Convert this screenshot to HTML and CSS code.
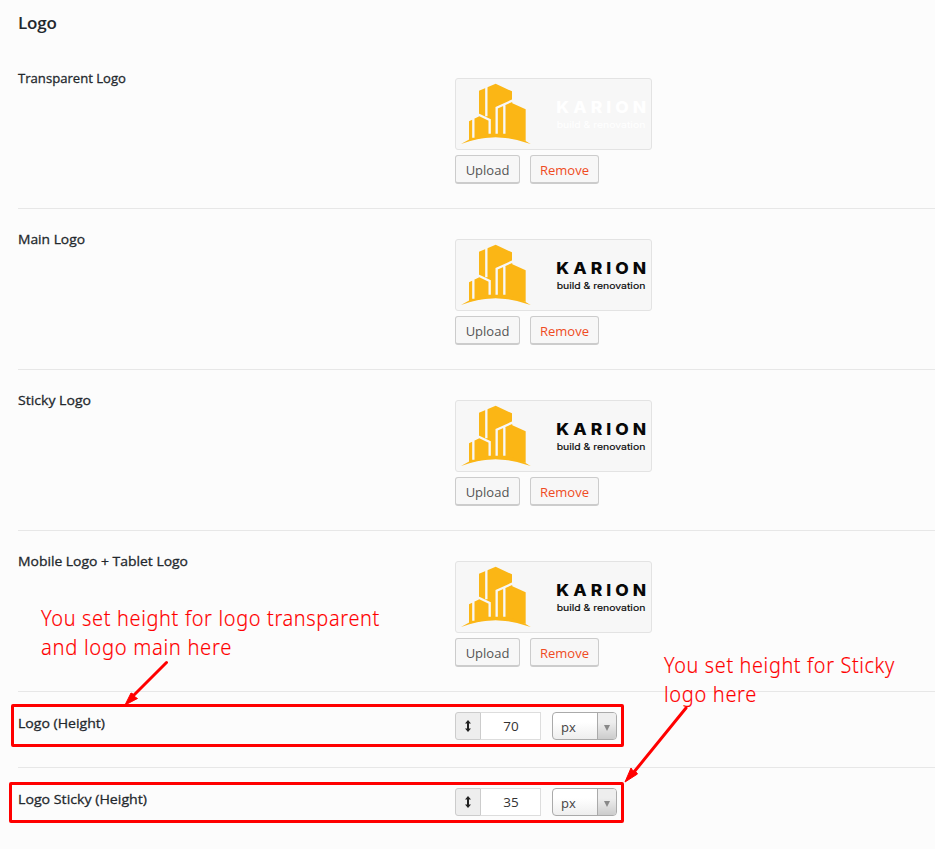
FILE: index.html
```html
<!DOCTYPE html>
<html lang="en">
<head>
<meta charset="utf-8">
<title>Logo</title>
<link rel="stylesheet" href="styles.css">
</head>
<body>
<main class="panel">
  <h2 class="title">Logo</h2>
  <div id="rows"></div>
</main>
<svg class="notes" width="935" height="849" viewBox="0 0 935 849">
  <g class="frame">
    <rect x="12.5" y="705.5" width="610" height="40" rx="0.5"/>
    <rect x="10.5" y="783.5" width="612" height="38" rx="0.5"/>
    <path d="M166.5 662.5L132 697M686 708L634 772"/>
  </g>
  <path class="head" d="M125 705L131 693L133 694L135 697L137.500 698.500ZM625 782L631 768L633 771L636 772L637.500 774Z"/>
  <text x="41" y="626" textLength="339" lengthAdjust="spacingAndGlyphs">You set height for logo transparent</text>
  <text x="41" y="655" textLength="191" lengthAdjust="spacingAndGlyphs">and logo main here</text>
  <text x="664" y="673" textLength="231" lengthAdjust="spacingAndGlyphs">You set height for Sticky</text>
  <text x="664" y="702" textLength="93" lengthAdjust="spacingAndGlyphs">logo here</text>
</svg>
<script src="app.js"></script>
</body>
</html>
```
FILE: styles.css
```css
* { box-sizing: border-box; }
body { margin: 0; width: 935px; height: 849px; overflow: hidden; position: relative; background: #fcfcfc; color: #23282d; font-family: "Open Sans", "Noto Sans", sans-serif; font-size: 13px; }
.panel { padding-left: 18px; }
.title { margin: 0; height: 48px; padding-top: 11px; font-size: 17px; line-height: 24px; font-weight: 600; letter-spacing: -0.2px; }
.row { display: flex; height: 161px; border-bottom: 1px solid #e7e7e7; }
.row.size { height: 76px; }
.row:last-child { border-bottom: 0; }
.label { width: 437px; padding-top: 20px; line-height: 20px; font-size: 13.500px; font-weight: 400; }
.label svg { display: block; overflow: visible; fill: #23282d; stroke: #23282d; stroke-width: 0.3; }
.media { padding-top: 30px; }
.preview { width: 197px; height: 72px; border: 1px solid #e3e3e3; border-radius: 3px; background: #f7f7f7; }
.preview svg { display: block; margin: -1px; }
.mark { fill: #fbb615; }
.gap { fill: none; stroke: #f7f7f7; stroke-width: 7; }
.brand { font: 800 48px "Inter", sans-serif; letter-spacing: 11px; fill: #080808; }
.tag { font: 400 27px "Inter", sans-serif; fill: #080808; stroke: #080808; stroke-width: 0.5; }
.light .brand, .light .tag { fill: #fff; stroke: none; }
.buttons { display: flex; gap: 10px; margin-top: 5px; }
.btn { height: 29px; width: 65px; padding: 2px 0 0; border: 1px solid #ccc; border-bottom-width: 2px; border-radius: 3px; background: #f7f7f7; color: #555; font: 13px/24px "Open Sans", sans-serif; }
.btn.remove { width: 69px; color: #ef4b23; }
.controls { display: flex; padding-top: 20px; }
.size .label { padding-top: 21px; }
.addon { width: 26px; height: 28px; border: 1px solid #ccc; border-radius: 3px 0 0 3px; background: #eee; display: flex; align-items: center; justify-content: center; }
.value { width: 60px; height: 28px; border: 1px solid #ddd; border-left: 0; background: #fff; color: #333; text-align: center; line-height: 26px; font-size: 13.500px; padding-left: 1px; }
.unit { width: 65px; height: 28px; margin-left: 11px; border: 1px solid #aaa; border-radius: 4px; display: flex; overflow: hidden; background: linear-gradient(#fff 35%, #eee); color: #444; }
.unit span { width: 44px; padding-left: 8px; line-height: 29px; }
.unit i { flex: 1; border-left: 1px solid #aaa; background: linear-gradient(#eee 35%, #ccc); display: flex; align-items: center; justify-content: center; padding-top: 3px; }
.unit i::after { content: ""; border: 3px solid transparent; border-top: 6px solid #888; border-bottom: 0; }
.notes { position: absolute; left: 0; top: 0; pointer-events: none; }
.notes text { font: 300 21px "Noto Sans", "Open Sans", sans-serif; letter-spacing: 0.7px; fill: #f00; stroke: #f00; stroke-width: 0.15; }
.frame { fill: none; stroke: #f00; stroke-width: 3; stroke-linecap: round; }
.head { fill: #f00; stroke: #f00; stroke-width: 1; }
```
FILE: app.js
```js
const label = (text, width) => `<div class="label"><svg width="${width}" height="20"><text x="0" y="15" textLength="${width}" lengthAdjust="spacingAndGlyphs">${text}</text></svg></div>`;

const logo = `<svg width="197" height="72" viewBox="30 27 591 216">
  <path class="mark" d="M102 65L152 44L201 67V95L202 103L242 121V216Q205 205 152 204Q105 205 72 215V153L102 139Z"/>
  <path class="mark" d="M48 225Q100 192 152 193Q205 192 257 225Q205 206 152 205Q100 206 48 225Z"/>
  <path class="gap" d="M124 54V142M85 146V206M69 154L103 138L134 153V194M155 194V116L204 94M178 106V194"/>
  <text class="brand" x="334" y="131" textLength="281" lengthAdjust="spacingAndGlyphs">KARION</text>
  <text class="tag" x="335" y="177" textLength="266" lengthAdjust="spacingAndGlyphs">build &amp; renovation</text>
</svg>`;

const media = (text, width, tone = "") => `<section class="row">${label(text, width)}
  <div class="media"><div class="preview ${tone}">${logo}</div>
  <div class="buttons"><button class="btn">Upload</button><button class="btn remove">Remove</button></div></div></section>`;

const size = (text, width, value) => `<section class="row size">${label(text, width)}
  <div class="controls"><div class="addon"><svg width="8" height="14" viewBox="0 0 8 14"><path d="M4 1L7 4.500H5V9.500H7L4 13L1 9.500H3V4.500H1Z" fill="#222"/></svg></div>
  <div class="value">${value}</div><div class="unit"><span>px</span><i></i></div></div></section>`;

document.getElementById("rows").innerHTML =
  media("Transparent Logo", 108, "light") +
  media("Main Logo", 67) +
  media("Sticky Logo", 73) +
  media("Mobile Logo + Tablet Logo", 170) +
  size("Logo (Height)", 87, 70) +
  size("Logo Sticky (Height)", 129, 35);
```
